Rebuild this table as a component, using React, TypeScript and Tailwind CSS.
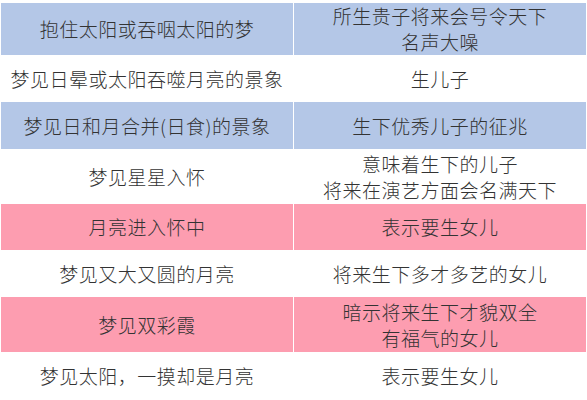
const rows: { left: string; right: string[]; tone: "blue" | "pink" | "white"; h: string }[] = [
  { left: "抱住太阳或吞咽太阳的梦", right: ["所生贵子将来会号令天下", "名声大噪"], tone: "blue", h: "h-[52px]" },
  { left: "梦见日晕或太阳吞噬月亮的景象", right: ["生儿子"], tone: "white", h: "h-[47px]" },
  { left: "梦见日和月合并(日食)的景象", right: ["生下优秀儿子的征兆"], tone: "blue", h: "h-[47px]" },
  { left: "梦见星星入怀", right: ["意味着生下的儿子", "将来在演艺方面会名满天下"], tone: "white", h: "h-[55px]" },
  { left: "月亮进入怀中", right: ["表示要生女儿"], tone: "pink", h: "h-[46px]" },
  { left: "梦见又大又圆的月亮", right: ["将来生下多才多艺的女儿"], tone: "white", h: "h-[47px]" },
  { left: "梦见双彩霞", right: ["暗示将来生下才貌双全", "有福气的女儿"], tone: "pink", h: "h-[55px]" },
  { left: "梦见太阳，一摸却是月亮", right: ["表示要生女儿"], tone: "white", h: "h-[48px]" },
];

const toneClass = {
  blue: "bg-[#b4c7e7]",
  pink: "bg-[#fd9db0]",
  white: "bg-white",
};

export default function App() {
  return (
    <div
      className="w-[587px] h-[400px] overflow-hidden bg-white pt-[3px] pl-[1px] text-[#333333] font-light"
      style={{ fontFamily: '"Noto Sans CJK SC", "Noto Sans", sans-serif' }}
    >
      <div className="grid grid-cols-[292px_292px] gap-x-px">
        {rows.map((r, i) => (
          <div key={i} className="contents">
            <div className={`${toneClass[r.tone]} ${r.h} flex items-center justify-center text-[19px] leading-[26px] tracking-[0.5px]`}>
              {r.left}
            </div>
            <div className={`${toneClass[r.tone]} ${r.h} flex flex-col items-center justify-center text-[19px] leading-[26px] tracking-[0.5px]`}>
              {r.right.map((t) => (
                <span key={t}>{t}</span>
              ))}
            </div>
          </div>
        ))}
      </div>
    </div>
  );
}
